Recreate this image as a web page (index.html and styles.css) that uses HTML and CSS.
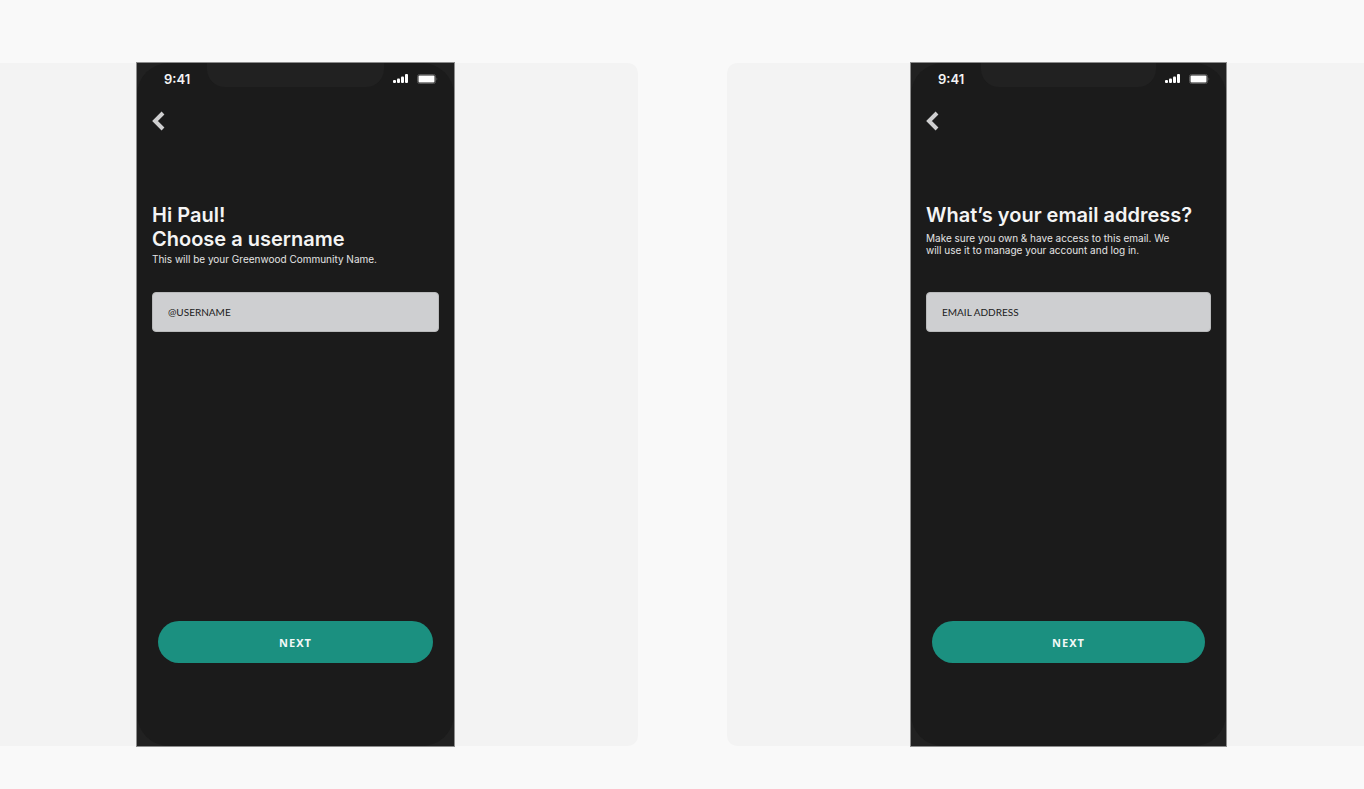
FILE: index.html
```
<!DOCTYPE html>
<html lang="en">

<head>
    <meta charset="UTF-8" />
    <meta name="viewport" content="width=device-width, initial-scale=1.0" />
    <title>Greenwood sign up</title>
    <link rel="stylesheet" href="styles.css">
</head>

<body>
    <main class="board">
        <section class="panel">
            <div class="phone phone-username">
                <form class="screen">
                    <div class="status">
                        <span class="time">9:41</span>
                        <span class="notch"></span>
                        <span class="signals">
                            <svg class="bars" viewBox="0 0 15 10" aria-hidden="true">
                                <rect x="0" y="6" width="3" height="3" rx="1" />
                                <rect x="4" y="4.500" width="3" height="4.500" rx="1" />
                                <rect x="8" y="2.500" width="3" height="6.500" rx="1" />
                                <rect x="12" y="0" width="3" height="9" rx="1" />
                            </svg>
                            <svg class="battery" viewBox="0 0 21 10" aria-hidden="true">
                                <rect class="case" x="0.5" y="0.5" width="18" height="9" rx="2" />
                                <rect x="1.500" y="1.500" width="16" height="7" rx="1" />
                                <path class="tip" d="M19.5 3.5c1 .3 1 2.700 0 3z" />
                            </svg>
                        </span>
                    </div>
                    <a class="back" href="#" aria-label="Back">
                        <svg viewBox="0 0 14 20" aria-hidden="true">
                            <path d="M12 2L4 10l8 8" />
                        </svg>
                    </a>
                    <div class="intro">
                        <h1>Hi Paul!<br>Choose a username</h1>
                        <p>This will be your Greenwood Community Name.</p>
                    </div>
                    <input class="field" type="text" placeholder="@USERNAME" aria-label="Username">
                    <button class="next" type="button">NEXT</button>
                </form>
            </div>
        </section>

        <section class="panel">
            <div class="phone phone-email">
                <form class="screen">
                    <div class="status">
                        <span class="time">9:41</span>
                        <span class="notch"></span>
                        <span class="signals">
                            <svg class="bars" viewBox="0 0 15 10" aria-hidden="true">
                                <rect x="0" y="6" width="3" height="3" rx="1" />
                                <rect x="4" y="4.500" width="3" height="4.500" rx="1" />
                                <rect x="8" y="2.500" width="3" height="6.500" rx="1" />
                                <rect x="12" y="0" width="3" height="9" rx="1" />
                            </svg>
                            <svg class="battery" viewBox="0 0 21 10" aria-hidden="true">
                                <rect class="case" x="0.5" y="0.5" width="18" height="9" rx="2" />
                                <rect x="1.500" y="1.500" width="16" height="7" rx="1" />
                                <path class="tip" d="M19.5 3.5c1 .3 1 2.700 0 3z" />
                            </svg>
                        </span>
                    </div>
                    <a class="back" href="#" aria-label="Back">
                        <svg viewBox="0 0 14 20" aria-hidden="true">
                            <path d="M12 2L4 10l8 8" />
                        </svg>
                    </a>
                    <div class="intro intro-spaced">
                        <h1>What’s your email address?</h1>
                        <p>Make sure you own &amp; have access to this email. We<br>will use it to manage your account and log in.</p>
                    </div>
                    <input class="field" type="email" placeholder="EMAIL ADDRESS" aria-label="Email address">
                    <button class="next" type="button">NEXT</button>
                </form>
            </div>
        </section>
    </main>
</body>

</html>
```

FILE: styles.css
```
* {
    box-sizing: border-box;
}

body {
    margin: 0;
    background-color: #f9f9f9;
    font-family: Inter, sans-serif;
    overflow: hidden;
}

/* the two panels run off both sides of the window */
.board {
    display: grid;
    grid-template-columns: 685fr 683fr;
    gap: 89px;
    margin: 0 -46px 0 -47px;
    padding: 63px 0 43px;
}

.panel {
    display: flex;
    justify-content: center;
    background-color: #f3f3f3;
    border-radius: 10px;
}

.phone {
    display: flex;
    background-color: #212121;
    outline: 1px solid #8c8c8c;
}

.phone-username {
    width: 317px;
}

.phone-email {
    width: 315px;
}

.screen {
    flex: 1;
    display: flex;
    flex-direction: column;
    min-width: 0;
    min-height: 683px;
    background-color: #1b1b1b;
    border-radius: 32px;
}

/* status bar */
.status {
    display: grid;
    grid-template-columns: 70px 1fr 70px;
    height: 32px;
    align-items: center;
}

.time {
    padding-left: 27px;
    color: #f4f4f4;
    font: 600 13px/16px Inter, sans-serif;
}

.notch {
    align-self: start;
    height: 24px;
    background-color: #212121;
    border-radius: 0 0 18px 18px;
}

.signals {
    display: flex;
    gap: 9px;
    padding-left: 9px;
    fill: #fff;
}

.bars {
    width: 15px;
    height: 10px;
}

.battery {
    width: 21px;
    height: 10px;
}

.battery .case {
    fill: none;
    stroke: #555;
}

.battery .tip {
    fill: #555;
}

.back {
    align-self: flex-start;
    height: 20px;
    margin: 16px 0 0 14px;
}

.back svg {
    display: block;
    width: 14px;
    height: 20px;
    fill: none;
    stroke: #cfcfd0;
    stroke-width: 4;
}

/* text */
.intro {
    height: 89px;
    margin: 72px 15px 0;
    color: #f4f4f4;
}

.intro h1 {
    margin: 0 0 2px;
    font: 600 20px/24px Inter, sans-serif;
    white-space: nowrap;
}

.intro p {
    margin: 0;
    color: #e4e4e4;
    font-size: 10px;
    line-height: 12px;
    white-space: nowrap;
}

.intro-spaced h1 {
    margin-bottom: 5px;
}

.field {
    height: 40px;
    margin: 0 15px;
    padding: 0 15px;
    border: 1px solid #b9babb;
    border-radius: 4px;
    background-color: #cecfd1;
    font: 10px/14px Lato, sans-serif;
}

.field::placeholder {
    color: #1b1b1b;
    opacity: 1;
}

.next {
    height: 42px;
    margin: auto 21px 83px;
    padding: 2px 0 0;
    border: none;
    border-radius: 21px;
    background-color: #1b9080;
    color: #f2f8f7;
    font: 700 11px/16px "Noto Sans", sans-serif;
    letter-spacing: 1px;
    cursor: pointer;
}
```
